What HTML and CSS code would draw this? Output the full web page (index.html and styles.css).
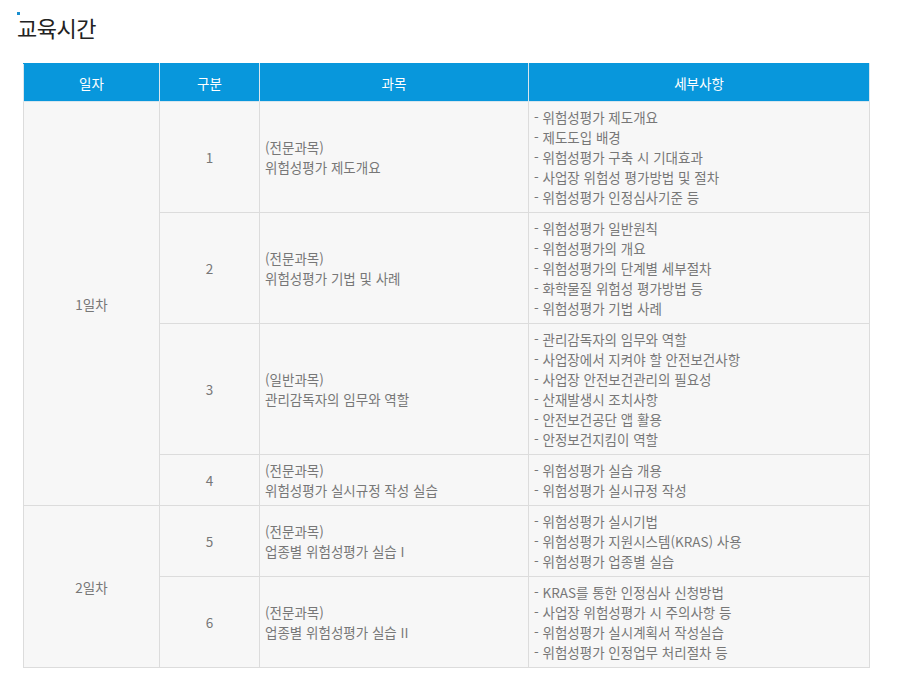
FILE: index.html
```html
<!DOCTYPE html>
<html lang="ko">
<head>
<meta charset="utf-8">
<link rel="stylesheet" href="styles.css">
</head>
<body>
<div class="page">
  <h2 class="title"><span class="dot"></span>교육시간</h2>
  <table class="sched">
    <colgroup>
      <col class="c1"><col class="c2"><col class="c3"><col class="c4">
    </colgroup>
    <thead>
      <tr><th>일자</th><th>구분</th><th>과목</th><th>세부사항</th></tr>
    </thead>
    <tbody>
      <tr>
        <td rowspan="4" class="center">1일차</td>
        <td class="center">1</td>
        <td>(전문과목)<br>위험성평가 제도개요</td>
        <td>- 위험성평가 제도개요<br>- 제도도입 배경<br>- 위험성평가 구축 시 기대효과<br>- 사업장 위험성 평가방법 및 절차<br>- 위험성평가 인정심사기준 등</td>
      </tr>
      <tr>
        <td class="center">2</td>
        <td>(전문과목)<br>위험성평가 기법 및 사례</td>
        <td>- 위험성평가 일반원칙<br>- 위험성평가의 개요<br>- 위험성평가의 단계별 세부절차<br>- 화학물질 위험성 평가방법 등<br>- 위험성평가 기법 사례</td>
      </tr>
      <tr>
        <td class="center">3</td>
        <td>(일반과목)<br>관리감독자의 임무와 역할</td>
        <td>- 관리감독자의 임무와 역할<br>- 사업장에서 지켜야 할 안전보건사항<br>- 사업장 안전보건관리의 필요성<br>- 산재발생시 조치사항<br>- 안전보건공단 앱 활용<br>- 안정보건지킴이 역할</td>
      </tr>
      <tr>
        <td class="center">4</td>
        <td>(전문과목)<br>위험성평가 실시규정 작성 실습</td>
        <td>- 위험성평가 실습 개용<br>- 위험성평가 실시규정 작성</td>
      </tr>
      <tr>
        <td rowspan="2" class="center">2일차</td>
        <td class="center">5</td>
        <td>(전문과목)<br>업종별 위험성평가 실습 I</td>
        <td>- 위험성평가 실시기법<br>- 위험성평가 지원시스템(KRAS) 사용<br>- 위험성평가 업종별 실습</td>
      </tr>
      <tr>
        <td class="center">6</td>
        <td>(전문과목)<br>업종별 위험성평가 실습 II</td>
        <td>- KRAS를 통한 인정심사 신청방법<br>- 사업장 위험성평가 시 주의사항 등<br>- 위험성평가 실시계획서 작성실습<br>- 위험성평가 인정업무 처리절차 등</td>
      </tr>
    </tbody>
  </table>
</div>
</body>
</html>
```

FILE: styles.css
```css
html, body {
  margin: 0;
  padding: 0;
  background: #fff;
}
body {
  font-family: "Noto Sans CJK KR", "Noto Sans", sans-serif;
  color: #777;
}
.page {
  padding: 10px 33px 0 23px;
}
.title {
  position: relative;
  margin: 0 0 21px -6px;
  padding-top: 2px;
  font-size: 22px;
  font-weight: 400;
  line-height: 30px;
  color: #222;
  letter-spacing: -0.5px;
}
.dot {
  position: absolute;
  left: 0;
  top: 2px;
  width: 3px;
  height: 3px;
  background: #1a8fd0;
}
.sched {
  width: 846px;
  border-collapse: collapse;
  table-layout: fixed;
  font-size: 13.5px;
  line-height: 20px;
}
.c1 { width: 136px; }
.c2 { width: 100px; }
.c3 { width: 269px; }
.c4 { width: 341px; }
.sched th {
  background: #0897dc;
  color: #fff;
  font-weight: 400;
  height: 37px;
  padding: 0;
  border: 1px solid #d8e6ee;
  border-top-color: #0897dc;
}
.sched td {
  background: #f7f7f7;
  border: 1px solid #dcdcdc;
  padding: 5px 5px 5px 5px;
  vertical-align: middle;
}
.sched td.center {
  text-align: center;
}
```
